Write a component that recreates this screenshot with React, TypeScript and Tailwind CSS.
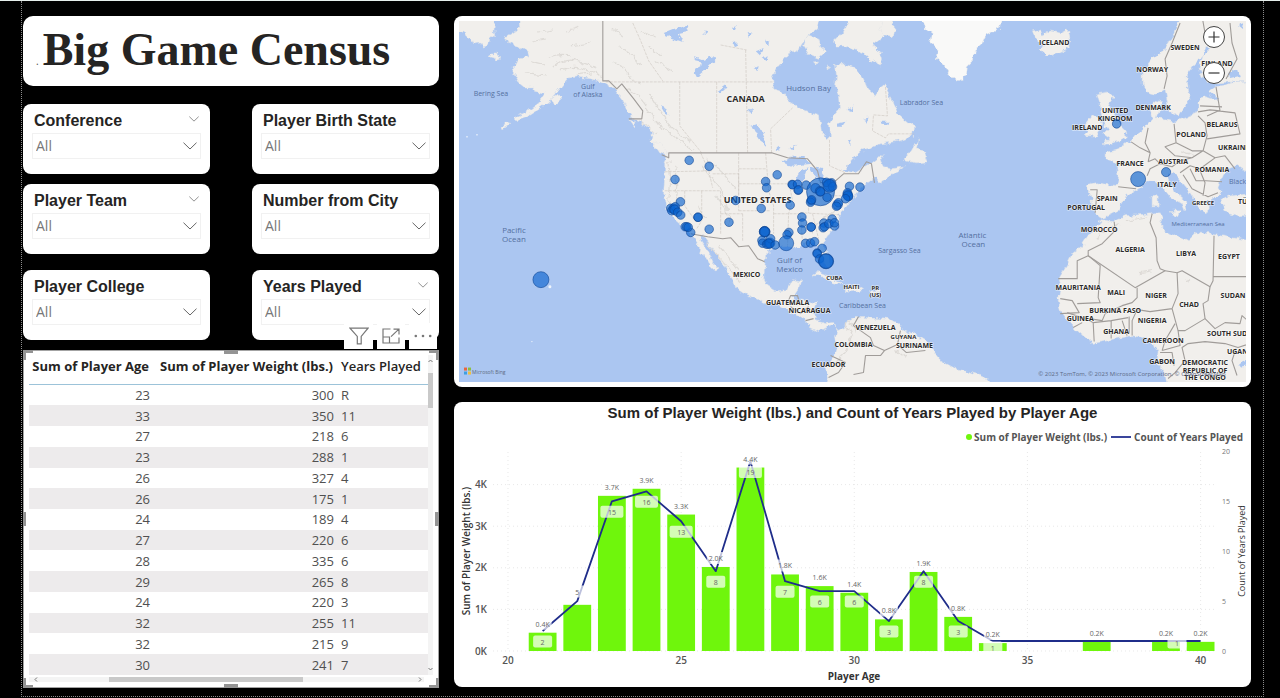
import React from "react";

const OCEAN = "#abc6f1";
const LAND = "#f1efec";
const UI_FONT = "font-['Open_Sans','Noto_Sans',sans-serif]";

/* ---------- Slicers ---------- */

type Slicer = { id: string; label: string; collapsible: boolean };

const SLICERS: Slicer[][] = [
  [
    { id: "conference", label: "Conference", collapsible: true },
    { id: "birth-state", label: "Player Birth State", collapsible: false },
  ],
  [
    { id: "team", label: "Player Team", collapsible: true },
    { id: "city", label: "Number from City", collapsible: false },
  ],
  [
    { id: "college", label: "Player College", collapsible: false },
    { id: "years", label: "Years Played", collapsible: true },
  ],
];

function Chevron({ className }: { className: string }) {
  return (
    <svg viewBox="0 0 14 8" className={className} fill="none" stroke="#666" strokeWidth="1" aria-hidden="true">
      <path d="M0.5 0.7 L7 7 L13.5 0.7" />
    </svg>
  );
}

function SlicerCard({ slicer }: { slicer: Slicer }) {
  return (
    <div className="h-[70px] w-[187px] rounded-lg bg-white px-[9px] pt-1">
      <div className="flex h-[25px] items-center justify-between pr-[2px] pl-[2px]">
        <label
          htmlFor={slicer.id}
          className="font-['Liberation_Sans',Arial,sans-serif] text-base leading-6 font-bold whitespace-nowrap text-[#252423]"
        >
          {slicer.label}
        </label>
        {slicer.collapsible && (
          <button type="button" aria-label={`${slicer.label} options`} className="pb-1">
            <Chevron className="h-[6px] w-[10px]" />
          </button>
        )}
      </div>
      <div className="relative">
        <select
          id={slicer.id}
          className={`${UI_FONT} h-[26px] w-full appearance-none border border-[#f1f1f1] bg-white pl-[3px] text-sm text-[#777]`}
        >
          <option>All</option>
        </select>
        <Chevron className="pointer-events-none absolute top-[9px] right-1 h-[8px] w-[14px]" />
      </div>
    </div>
  );
}

/* ---------- Table ---------- */

const ROWS: [number, number, string][] = [
  [23, 300, "R"],
  [33, 350, "11"],
  [27, 218, "6"],
  [23, 288, "1"],
  [26, 327, "4"],
  [26, 175, "1"],
  [24, 189, "4"],
  [27, 220, "6"],
  [28, 335, "6"],
  [29, 265, "8"],
  [24, 220, "3"],
  [32, 255, "11"],
  [32, 215, "9"],
  [30, 241, "7"],
];

const HANDLES = [
  "top-[-1px] left-[-1px] h-[10px] w-[10px] border-t-[3px] border-l-[3px]",
  "top-[-1px] right-[-1px] h-[10px] w-[10px] border-t-[3px] border-r-[3px]",
  "bottom-[-1px] left-[-1px] h-[10px] w-[10px] border-b-[3px] border-l-[3px]",
  "bottom-[-1px] right-[-1px] h-[10px] w-[10px] border-r-[3px] border-b-[3px]",
  "top-[-1px] left-1/2 h-[4px] w-[14px] -translate-x-1/2 border-t-[4px]",
  "bottom-[-1px] left-1/2 h-[4px] w-[14px] -translate-x-1/2 border-t-[4px]",
  "top-1/2 left-[-1px] h-[14px] w-[3px] -translate-y-1/2 border-l-[3px]",
  "top-1/2 right-[-1px] h-[14px] w-[4px] -translate-y-1/2 border-l-[4px]",
];

function VisualToolbar() {
  return (
    <div className="absolute right-[1px] bottom-full mb-[2px] flex gap-1">
      <button type="button" aria-label="Filters" className="flex h-[26px] w-[29px] items-center justify-center bg-white">
        <svg viewBox="0 0 20 18" className="h-[18px] w-[20px]" fill="none" stroke="#777" strokeWidth="1.2">
          <path d="M1 1.2 H19 L12.2 9.4 V16.8 H8.3 V9.4 Z" />
        </svg>
      </button>
      <button type="button" aria-label="Focus mode" className="flex h-[26px] w-[28px] items-center justify-center bg-white">
        <svg viewBox="0 0 18 16" className="h-[16px] w-[18px]" fill="none" stroke="#777" strokeWidth="1.2">
          <path d="M8.5 1 H1 V15 H17 V9.5 M1 9 H7.5 V15 M9 8.6 L16.6 1.4 M11.5 1.2 H17 V6.4" />
        </svg>
      </button>
      <button type="button" aria-label="More options" className="flex h-[26px] w-[28px] items-center justify-center bg-white">
        <svg viewBox="0 0 18 4" className="h-[4px] w-[18px]" fill="#777">
          <circle cx="1.8" cy="2" r="1.3" />
          <circle cx="9" cy="2" r="1.3" />
          <circle cx="16.2" cy="2" r="1.3" />
        </svg>
      </button>
    </div>
  );
}

function PlayerTable() {
  return (
    <section className="relative mt-[10px] h-[338px] border border-[#a3a3a3] bg-white pt-1 pl-[5px]">
      <VisualToolbar />
      {HANDLES.map((c) => (
        <span key={c} className={`absolute border-[#949494] ${c}`} />
      ))}
      <div className="flex">
        <table className={`${UI_FONT} h-[320px] flex-1 table-fixed border-collapse text-[13px] leading-[18px] text-[#505050]`}>
          <colgroup>
            <col className="w-[124px]" />
            <col className="w-[184px]" />
            <col />
          </colgroup>
          <thead>
            <tr className="h-[29px] border-b border-[#9cc3d9] align-top text-[13px] whitespace-nowrap text-[#252423]">
              <th className="p-0 pt-[2px] pr-1 text-right font-bold">Sum of Player Age</th>
              <th className="p-0 pt-[2px] pr-1 text-right font-bold">Sum of Player Weight (lbs.)</th>
              <th className="p-0 pt-[2px] pl-1 text-left font-semibold">Years Played</th>
            </tr>
          </thead>
          <tbody>
            {ROWS.map(([age, weight, years], i) => (
              <tr key={i} className="even:bg-[#edebec]">
                <td className="p-0 pr-[3px] text-right">{age}</td>
                <td className="p-0 pr-[3px] text-right">{weight}</td>
                <td className="p-0 pl-1">{years}</td>
              </tr>
            ))}
          </tbody>
        </table>
        <div className="mr-[5px] flex w-[5px] flex-col items-center bg-[#f4f4f4] pt-1 pb-1">
          <svg viewBox="0 0 5 4" className="h-1 w-[5px]" fill="none" stroke="#777"><path d="M0.5 3 L2.5 1 L4.5 3" /></svg>
          <div className="mt-[10px] h-[35px] w-full bg-[#c9c9c9]" />
          <svg viewBox="0 0 5 4" className="mt-auto h-1 w-[5px]" fill="none" stroke="#777"><path d="M0.5 1 L2.5 3 L4.5 1" /></svg>
        </div>
      </div>
      <div className="mt-[2px] mr-[14px] flex h-[5px] items-center bg-[#f4f4f4] pl-[5px]">
        <svg viewBox="0 0 4 5" className="h-[5px] w-1" fill="none" stroke="#777"><path d="M3 0.5 L1 2.5 L3 4.5" /></svg>
        <div className="ml-[71px] h-full w-[194px] bg-[#c9c9c9]" />
        <svg viewBox="0 0 4 5" className="mr-[2px] ml-auto h-[5px] w-1" fill="none" stroke="#777"><path d="M1 0.5 L3 2.5 L1 4.5" /></svg>
      </div>
    </section>
  );
}

/* ---------- Map ---------- */

const LAND_SHAPES = [
  // Siberia and the Bering islands
  "M450 10 L494 10 L493 30 L494 34 L489 38 L487 45 L482 46 L479 42 L473 43 L470 38 L466 36 L463 30 L450 31 Z",
  "M489 53 L494 53 L500 57 L497 58 L490 56 Z",
  // North and Central America
  "M517 10 L519 27 L512 31 L504 36 L507 42 L517 46 L527 50 L528 56 L518 58 L515 64 L511 68 L514 75 L518 82 L523 86 L531 86 L534 90 L541 92 L545 92 L538 102 L527 110 L514 117 L516 119 L527 115 L538 108 L547 102 L555 93 L563 83 L569 76 L575 75 L578 76 L590 78 L602 81 L610 86 L615 91 L622 100 L627 110 L632 117 L641 121 L645 127 L652 132 L650 140 L655 147 L663 153 L666 157 L664 162 L664 175 L663 192 L665 200 L666 208 L672 217 L679 223 L685 228 L689 233 L693 236 L700 248 L699 253 L707 258 L710 265 L717 271 L718 268 L712 262 L707 250 L700 240 L700 235 L705 238 L712 247 L722 262 L727 272 L733 280 L735 287 L742 292 L753 297 L765 302 L775 303 L785 308 L792 313 L803 318 L810 327 L818 331 L823 328 L833 325 L837 329 L835 337 L837 347 L835 353 L828 363 L825 368 L827 377 L823 392 L998 392 L983 375 L967 371 L955 368 L940 360 L933 350 L925 340 L917 335 L902 329 L897 323 L890 319 L877 318 L863 317 L855 317 L848 320 L845 326 L838 331 L832 322 L825 323 L818 321 L815 317 L813 310 L815 303 L805 300 L795 299 L792 297 L798 288 L800 280 L792 279 L787 289 L775 290 L767 285 L763 277 L764 267 L765 255 L770 249 L782 246 L790 246 L800 248 L803 243 L815 243 L818 249 L820 258 L825 265 L829 266 L830 260 L826 250 L823 241 L827 235 L835 228 L840 221 L838 214 L845 208 L850 201 L854 196 L860 188 L867 182 L875 177 L879 182 L889 176 L899 169 L904 166 L892 168 L884 167 L880 160 L884 153 L876 157 L866 165 L855 172 L842 170 L853 158 L863 149 L880 143 L900 140 L913 135 L914 127 L907 122 L897 113 L893 103 L890 93 L885 83 L878 88 L875 95 L867 88 L863 78 L855 67 L843 63 L835 64 L836 75 L835 85 L838 95 L839 108 L833 115 L829 122 L830 135 L826 139 L821 132 L819 115 L810 112 L798 107 L790 102 L783 92 L773 88 L772 77 L778 65 L788 52 L800 47 L807 35 L817 28 L822 10 Z",
  "M551 97 L556 94 L561 98 L558 101 L554 104 Z",
  "M500 126 L508 121 L507 124 L501 128 Z",
  "M652 141 L659 143 L667 150 L666 155 L659 152 Z",
  "M629 119 L635 121 L634 126 Z",
  // Arctic islands
  "M834 40 L842 32 L852 10 L895 10 L884 35 L873 43 L882 57 L880 64 L872 60 L863 52 L853 48 L843 45 L835 45 Z",
  "M883 10 L895 24 L893 36 L885 34 L878 28 Z",
  "M803 45 L807 35 L817 37 L820 46 L825 50 L817 57 L808 53 Z",
  "M813 61 L819 60 L816 64 Z",
  "M826 64 L829 66 L827 69 Z",
  // Newfoundland
  "M903 158 L911 149 L917 138 L915 148 L923 150 L927 161 L917 162 L904 160 Z",
  // Caribbean
  "M811 275 L818 271 L828 275 L838 281 L843 284 L833 282 L820 275 Z",
  "M845 285 L855 284 L862 289 L852 291 L845 290 Z",
  "M868 290 L879 290 L878 292 L869 292 Z",
  // Iceland
  "M1033 30 L1040 28 L1042 35 L1050 30 L1060 32 L1067 28 L1069 38 L1070 46 L1057 53 L1047 55 L1040 49 L1043 43 L1036 40 Z",
  // British Isles
  "M1097 93 L1108 91 L1113 97 L1108 105 L1114 110 L1118 122 L1126 130 L1127 137 L1120 140 L1108 143 L1102 145 L1110 138 L1103 133 L1108 128 L1103 121 L1101 111 L1100 103 Z",
  "M1085 124 L1092 115 L1100 118 L1101 128 L1097 135 L1085 135 L1089 128 Z",
  // Scandinavia
  "M1182 10 L1173 35 L1165 48 L1152 58 L1142 70 L1142 82 L1147 92 L1155 94 L1165 87 L1168 105 L1172 112 L1179 115 L1184 106 L1190 99 L1187 87 L1186 75 L1194 65 L1203 55 L1206 43 L1210 48 L1203 55 L1199 67 L1203 78 L1215 82 L1228 81 L1260 80 L1260 10 Z",
  // Continental Europe
  "M1260 80 L1233 82 L1215 86 L1210 90 L1213 98 L1203 95 L1198 102 L1198 111 L1188 115 L1173 121 L1165 119 L1156 118 L1158 110 L1162 102 L1153 100 L1151 108 L1153 118 L1145 127 L1137 132 L1130 140 L1123 146 L1118 149 L1105 152 L1105 157 L1117 162 L1119 175 L1117 185 L1095 182 L1087 184 L1089 193 L1092 200 L1092 210 L1100 218 L1108 215 L1118 210 L1122 202 L1125 197 L1133 191 L1140 187 L1148 180 L1156 181 L1163 187 L1170 196 L1180 202 L1183 210 L1188 203 L1178 194 L1170 183 L1167 175 L1173 172 L1180 179 L1190 191 L1195 199 L1199 209 L1206 213 L1210 205 L1206 200 L1216 196 L1221 192 L1219 186 L1222 175 L1226 169 L1236 165 L1248 172 L1260 172 Z",
  "M1221 198 L1232 195 L1260 192 L1260 213 L1240 215 L1225 211 Z",
  "M1152 195 L1157 194 L1157 206 L1152 206 Z",
  "M1170 211 L1180 210 L1178 215 Z",
  // Africa
  "M1101 219 L1113 221 L1125 215 L1152 213 L1159 211 L1162 217 L1160 225 L1167 232 L1182 237 L1187 240 L1195 232 L1208 233 L1232 237 L1260 241 L1260 392 L1168 392 L1165 373 L1157 363 L1158 350 L1155 343 L1145 338 L1132 335 L1122 337 L1107 340 L1093 343 L1080 333 L1068 320 L1060 310 L1058 300 L1060 288 L1058 278 L1067 263 L1072 253 L1082 245 L1087 237 L1095 227 Z",
];

const GREENLAND =
  "M918 10 L925 27 L932 33 L930 42 L937 48 L936 58 L943 64 L948 72 L957 80 L965 76 L966 66 L972 60 L974 50 L981 44 L985 35 L993 31 L1000 27 L1005 10 Z";

const LAKES = [
  "M782 162 L790 156 L803 156 L812 163 L802 164 L792 165 Z",
  "M798 171 L806 168 L802 180 L797 189 L795 180 Z",
  "M808 166 L820 168 L827 178 L818 180 L812 173 Z",
  "M694 56 L702 59 L712 55 L717 58 L708 66 L697 75 L694 69 L701 65 Z",
  "M662 32 L672 28 L685 24 L687 31 L678 33 L683 41 L672 37 L664 34 Z",
  "M751 126 L758 124 L764 137 L766 145 L760 141 L755 134 Z",
  "M716 90 L724 84 L727 87 L719 92 Z",
  "M835 123 L846 121 L843 125 L836 125 Z",
  "M863 118 L868 117 L866 123 Z",
  "M880 121 L889 121 L886 124 L881 123 Z",
  "M848 109 L853 103 L851 110 Z",
  "M848 141 L852 139 L850 143 Z",
  "M773 148 L777 144 L779 150 Z",
  "M788 148 L797 146 L790 150 Z",
  "M662 104 L668 114 L666 115 L661 106 Z",
  "M1210 90 L1219 97 L1213 98 Z",
  "M1228 72 L1238 68 L1240 75 L1230 77 Z",
  "M1238 24 L1244 22 L1243 28 Z",
  "M1237 363 L1247 359 L1247 366 L1240 367 Z",
  "M732 40 L736 42 L734 46 Z",
  "M756 50 L763 47 L760 54 Z",
  "M762 58 L767 54 L766 61 Z",
  "M753 68 L758 65 L757 70 Z",
  "M765 38 L770 41 L767 43 Z",
  "M745 31 L751 33 L747 36 Z",
  "M703 28 L707 32 L703 34 Z",
  "M730 27 L736 25 L734 30 Z",
  "M748 111 L752 107 L752 112 Z",
];

const BORDERS = [
  "M602 10 V80 L608 80 L616 88 L621 83 L633 98 L642 110 L641 118 L628 118",
  "M661 154 L668 157 V152 H771 L787 157 L807 158 L817 170 L820 182 L835 180 L843 173 L858 173 L866 161 L871 163 L874 182",
  "M690 233 L707 236 L722 238 L730 237 L738 246 L748 245 L757 258 L764 261",
  "M787 302 L790 295 H797 L799 303 M790 306 L800 313 L808 306 M805 320 L813 318",
  "M858 316 L853 325 L870 337 L873 345 L884 350 L880 355 L865 355 L863 372 L853 374 M830 355 L845 362 L838 372 L828 377 M884 350 L897 344 L900 330 M897 344 L906 352 L925 350",
  "M1180 22 L1172 42 L1165 58 L1167 75 L1164 88 M1202 15 L1206 38 M1230 22 L1232 42 L1237 58 L1226 78",
  "M1148 127 L1145 142 L1150 152 L1148 161 M1150 152 L1140 147 L1131 141 M1148 161 L1155 158 L1160 163 L1150 168 L1147 175 M1160 163 L1172 166 L1180 160 L1192 157 M1174 123 L1176 142 L1165 146 L1175 155 L1192 157 L1203 150 L1192 150 L1176 142 M1203 150 L1207 135 L1205 122 L1198 115 M1198 111 L1210 109 L1220 110 L1216 86 M1207 115 L1218 110 L1235 112 L1240 133 L1207 138 M1200 105 L1222 106 M1203 150 L1215 157 L1225 155 L1235 168 M1215 157 L1200 168 L1190 165 L1180 172 M1190 168 L1196 180 L1206 180 L1222 181 M1183 174 L1192 188 L1200 192 L1208 196 L1218 192 M1200 170 L1205 182 L1203 195",
  "M1118 186 L1136 188 M1090 189 L1097 189 L1095 212",
  "M1114 221 L1115 230 L1102 243 L1088 250 V255 L1077 260 V278 H1058 M1088 255 L1135 287 L1165 270 L1160 268 L1157 260 L1156 237 L1150 222 L1152 213",
  "M1165 270 L1177 272 L1182 270 L1210 286 L1213 280 L1214 235 M1213 276 H1250",
  "M1088 255 L1100 265 L1098 297 L1100 302 L1077 303 M1137 287 L1137 297 L1132 302 L1122 305 L1105 313 L1102 320 L1082 317 L1067 312",
  "M1137 309 L1150 311 L1172 308 L1178 293 L1177 272 M1137 309 L1132 320 V335 M1210 286 L1208 300 L1203 303 L1205 318 L1185 330 L1178 330 L1172 308",
  "M1175 323 L1165 340 L1162 350 M1178 330 L1180 345 L1162 350 M1205 318 L1215 328 L1225 322 L1240 323 L1242 315 L1250 322 M1188 343 L1205 341 L1225 343 L1238 347 L1250 343 M1188 343 L1182 347 L1185 360 L1175 372 L1168 378 M1160 352 H1172 L1174 365",
  "M1111 320 V338 M1122 320 L1127 335 M1129 316 V333 M1093 322 L1094 341 M1082 317 L1093 322 L1111 320 L1128 317 M1060 298 L1072 300 L1079 312 L1060 313 M1073 327 L1082 322 M1236 348 L1232 360 L1237 375",
];

const FAINT_LINES = [
  "M605 81 H772 M679 81 V125 L701 152 M716 81 V152 M745 49 L747 152 M720 44 L746 49 M771 152 L770 128 L792 107 M829 139 V165 L845 172",
  "M632 22 L640 40 L648 60 L662 80",
  "M885 86 L887 115 L873 114 L872 130 L885 137 L888 133 H914",
  "M664 171 L712 170 M700 152 L708 170 L712 187 M684 190 H720 M701 190 V220 L696 228 M664 190 H684 V205 L696 222 M712 173 H738 V195 M720 190 V233 M738 152 V210 M738 168 H765 M738 183 H768 M738 210 H770 M742 213 V240 M765 152 L768 190 L773 205 V233 M768 183 H790 M773 213 H800 M788 180 L792 200 L788 213 L787 245 M800 215 L802 243 M808 195 V212 M800 212 L838 214 M812 213 L818 238 M720 213 H742 M830 195 H850",
];

const RELIEF = [
  "M552 66 Q562 57 575 60 T596 68",
  "M560 70 Q570 64 584 68 T602 77",
  "M548 56 Q560 52 570 54 M530 40 L545 37 M538 32 L552 30 M565 30 L578 26 M570 45 L590 42 M575 74 L590 72",
  "M612 60 L624 68 L632 80 L640 84 M618 45 L632 55 L640 66 M625 88 L638 95 L650 112 L662 130 M648 92 L658 108 L672 128 L690 142 M660 125 L675 138 L694 150 M640 120 L655 133",
  "M668 160 L670 180 L668 200 L678 216 M674 165 L676 185 L674 205 M700 165 L712 178 L722 192 L728 210 M706 158 L722 172 L735 188 M716 196 L726 208 L730 225 M706 242 L722 260 L740 282 M718 245 L735 265 L748 280 M698 205 L704 218",
  "M845 322 L852 335 L845 350 L835 364 M848 320 L856 332 M810 232 L822 218 L838 206 M895 350 L905 358",
  "M1140 272 L1152 270 M1095 238 L1108 228 L1118 224 M1125 220 L1148 216 M1180 150 L1195 155 M1185 280 L1190 278",
  "M640 30 L655 36 M648 45 L660 55 M655 60 L672 70 M612 28 L622 36 M530 60 L545 64 M525 72 L545 74",
];

type Tone = "country" | "water";
type MapLabel = { t: string; x: number; y: number; s: number; tone: Tone; start?: boolean };

const c = (t: string, x: number, y: number, s: number, start = false): MapLabel => ({ t, x, y, s, tone: "country", start });
const w = (t: string, x: number, y: number, s: number, start = false): MapLabel => ({ t, x, y, s, tone: "water", start });

const LABELS: MapLabel[] = [
  w("Bering Sea", 490, 93, 7), w("Gulf", 587, 86, 7), w("of Alaska", 587, 94, 7),
  w("Hudson Bay", 808, 87, 8), w("Labrador Sea", 921, 102, 7), c("CANADA", 745, 98, 9),
  c("UNITED STATES", 757, 199, 9), w("Gulf of", 789, 259, 8), w("Mexico", 789, 268, 8),
  c("MEXICO", 746, 274, 7), c("CUBA", 834, 277, 6), c("HAITI", 851, 286, 6), c("PR", 875, 287, 6), c("(US)", 875, 294, 6),
  c("GUATEMALA", 787, 302, 7), c("NICARAGUA", 809, 310, 7), w("Caribbean Sea", 862, 305, 7),
  c("VENEZUELA", 875, 327, 7), c("GUYANA", 903, 336, 6), c("COLOMBIA", 853, 344, 7), c("SURINAME", 914, 345, 7), c("ECUADOR", 828, 364, 7),
  w("Atlantic", 972, 234, 8), w("Ocean", 973, 243, 8), w("Sargasso Sea", 899, 250, 7),
  w("Pacific", 513, 229, 8), w("Ocean", 513, 238, 8),
  c("ICELAND", 1054, 42, 7), c("SWEDEN", 1185, 47, 7), c("NORWAY", 1152, 69, 7), c("FINLAND", 1217, 63, 7),
  c("UNITED", 1115, 110, 7), c("KINGDOM", 1115, 118, 7), c("DENMARK", 1153, 107, 7), c("IRELAND", 1087, 127, 7),
  c("BELARUS", 1222, 124, 7), c("POLAND", 1191, 134, 7), c("UKRAINE", 1218, 147, 7, true), c("FRANCE", 1130, 163, 7),
  c("AUSTRIA", 1173, 161, 7), c("ROMANIA", 1212, 169, 7), c("ITALY", 1167, 184, 7), w("Black Sea", 1229, 181, 7, true),
  c("SPAIN", 1107, 198, 7), c("GREECE", 1203, 202, 6), c("TÜRKİYE", 1238, 201, 7, true), c("PORTUGAL", 1086, 207, 7),
  w("Mediterranean Sea", 1198, 223, 6), c("MOROCCO", 1099, 229, 7), c("ALGERIA", 1130, 249, 7), c("LIBYA", 1186, 253, 7),
  c("EGYPT", 1229, 256, 7), c("MAURITANIA", 1078, 287, 7), c("MALI", 1116, 292, 7), c("NIGER", 1156, 295, 7),
  c("CHAD", 1189, 304, 7), c("SUDAN", 1233, 295, 7), c("BURKINA FASO", 1115, 310, 7), c("GUINEA", 1080, 318, 7),
  c("NIGERIA", 1152, 320, 7), c("GHANA", 1116, 331, 7), c("CAMEROON", 1163, 340, 7), c("SOUTH SUDAN", 1207, 333, 7, true),
  c("UGANDA", 1227, 351, 7, true), c("GABON", 1162, 361, 7), c("DEMOCRATIC", 1205, 362, 7), c("REPUBLIC OF", 1205, 370, 7), c("THE CONGO", 1205, 377, 7),
];

const BUBBLES: [number, number, number][] = [
  [540, 279, 8], [688.5, 159.5, 4.3], [708.5, 165.5, 4.3], [674.3, 178.7, 4.3], [679.7, 201, 4.3],
  [776.6, 174, 4.3], [765, 180.7, 4.3], [766, 187, 4.3], [735, 199.7, 4.3], [760.6, 207.7, 4.3],
  [789.6, 204.3, 4.3], [728.3, 221.5, 4.3], [708.5, 228.5, 4.3], [697.3, 216.5, 4.3], [697.3, 216.5, 4.3],
  [690, 231.7, 4.3], [670, 207.5, 4.3], [671, 210, 4.3], [673, 208, 4.8], [674.5, 206, 4.3], [674, 209, 4.8], [677, 211.5, 4.3], [680, 214.3, 4.3],
  [684.5, 226, 4.3], [686, 226, 4.3], [687.5, 226.5, 4.3],
  [805.6, 184.3, 4.3], [791.5, 183.7, 4.3], [792, 184, 4.3], [797, 183.5, 4.3], [797.5, 189.5, 4.3], [798, 189, 4.3],
  [820, 191, 14], [815, 187.5, 4.8], [819.5, 190.5, 4.8], [820, 191, 4.3], [829, 184.5, 5.5], [831, 182, 4.3], [826, 181.5, 4.3], [832, 186, 4.3], [829, 185, 6.5], [826.5, 196.5, 4.3],
  [810.5, 200, 4.3], [810, 201.5, 4.3], [811, 199, 4.3],
  [849, 185.5, 4.3], [859.5, 186.3, 4.3], [847, 194, 4.8], [848, 196, 4.3], [847, 192, 4.3], [847.5, 195, 4.8], [845, 198, 4.3], [837, 204, 4.8], [838, 202, 4.3], [836, 205.5, 4.3],
  [801.3, 216.3, 4.3], [802, 222.3, 4.3], [801.3, 229.3, 4.3], [810.6, 226.3, 4.3], [810.6, 226.3, 4.3],
  [823.3, 222.3, 4.3], [822.6, 227, 4.3], [824, 226, 4.3], [831.6, 218.3, 4.3], [834, 225.3, 4.3], [828.3, 223, 4.3], [834, 222, 4.3],
  [764, 231, 5.3], [764, 231, 5.3], [764, 231, 4.8], [761.3, 239.7, 4.3], [762, 242.5, 4.3], [766, 243.5, 4.3], [769.3, 242.3, 5], [769, 243, 4.3], [770, 238, 4.3], [768, 243, 4.8], [774.6, 244.3, 4.3],
  [788.3, 231.7, 4.3], [786.5, 234, 4.3], [785.6, 242.5, 7.5],
  [805, 242.6, 4.3], [810, 242.3, 4.3], [814, 241, 4.3], [821.6, 247.6, 4.3], [816.6, 252.3, 4.3], [816.6, 253, 4.3], [819, 258.3, 4.3], [825.5, 260.5, 7.6], [825.5, 260.5, 7.2],
  [1116.5, 123, 4.3], [1138, 178.3, 7.5], [1166, 171.3, 4.6],
];

function WorldMap() {
  return (
    <svg viewBox="458 20 788 361" className="block h-auto w-full font-['Open_Sans','Noto_Sans',sans-serif]" role="img" aria-label="Players by birth city">
      <defs>
        <filter id="coast" x="-5%" y="-5%" width="110%" height="110%">
          <feTurbulence type="fractalNoise" baseFrequency="0.14" numOctaves="3" seed="8" result="n" />
          <feDisplacementMap in="SourceGraphic" in2="n" scale="7" xChannelSelector="R" yChannelSelector="G" />
        </filter>
      </defs>
      <rect x="450" y="12" width="804" height="376" fill={OCEAN} />
      <g filter="url(#coast)">
        <g fill={LAND} stroke="#e3e4e6" strokeWidth="0.5">
          {LAND_SHAPES.map((d) => <path key={d} d={d} />)}
          <path d={GREENLAND} fill="#f9f9f8" />
        </g>
        <g fill={OCEAN}>{LAKES.map((d) => <path key={d} d={d} />)}</g>
        <g fill="none" stroke="#dedbd7" strokeWidth="1.2">{RELIEF.map((d) => <path key={d} d={d} />)}</g>
      </g>
      <g fill="none" stroke="#cbc5be" strokeWidth="0.6" strokeDasharray="3 1">
        {FAINT_LINES.map((d) => <path key={d} d={d} />)}
      </g>
      <g fill="none" stroke="#a09c99" strokeWidth="1.1" strokeLinejoin="round">
        {BORDERS.map((d) => <path key={d} d={d} />)}
      </g>
      <g fill="#fff" fillOpacity="0.8">
        <circle cx="549" cy="286" r="1.5" />
        <circle cx="531" cy="341" r="0.7" />
        <circle cx="466" cy="136" r="0.8" />
        <circle cx="476" cy="134" r="0.8" />
      </g>
      {LABELS.map((l) => (
        <text
          key={`${l.t}-${l.x}-${l.y}`}
          x={l.x}
          y={l.y + l.s * 0.36}
          fontSize={l.s}
          textAnchor={l.start ? "start" : "middle"}
          fontWeight={l.tone === "country" ? 700 : 400}
          fill={l.tone === "country" ? "#2c2a2a" : "#54709f"}
          stroke={l.tone === "country" ? "#ffffff" : "none"}
          strokeOpacity="0.7"
          strokeWidth={l.tone === "country" ? 1.2 : 0}
          paintOrder="stroke"
        >
          {l.t}
        </text>
      ))}
      <g fill="#0a62ce" fillOpacity="0.64" stroke="#0b4190" strokeOpacity="0.7" strokeWidth="0.8">
        {BUBBLES.map(([x, y, r], i) => <circle key={i} cx={x} cy={y} r={r} />)}
      </g>
      <rect x="463" y="367" width="3" height="3" fill="#e8663d" />
      <rect x="467" y="367" width="3" height="3" fill="#8cbf3f" />
      <rect x="463" y="371" width="3" height="3" fill="#3f9fe0" />
      <rect x="467" y="371" width="3" height="3" fill="#f3bd3b" />
      <text x="471" y="373" fontSize="5" fill="#5d6a80">Microsoft Bing</text>
      <text x="1038" y="375" fontSize="6" fill="#5c6a86">© 2023 TomTom, © 2023 Microsoft Corporation, © OpenStreetMap</text>
    </svg>
  );
}

function ZoomButton({ label, d }: { label: string; d: string }) {
  return (
    <button type="button" aria-label={label} className="flex size-[22px] items-center justify-center rounded-full border border-[#444] bg-white">
      <svg viewBox="0 0 12 12" className="size-3" stroke="#333" strokeWidth="1.2" fill="none"><path d={d} /></svg>
    </button>
  );
}

/* ---------- Combo chart ---------- */

type Point = { age: number; weight: number; weightLabel?: string; count: number; countLabel?: string; dx?: number; dy?: number };

const POINTS: Point[] = [
  { age: 21, weight: 0.44, weightLabel: "0.4K", count: 2, countLabel: "2" },
  { age: 22, weight: 1.11, count: 5, countLabel: "5", dy: -20 },
  { age: 23, weight: 3.73, weightLabel: "3.7K", count: 15, countLabel: "15" },
  { age: 24, weight: 3.9, weightLabel: "3.9K", count: 16, countLabel: "16" },
  { age: 25, weight: 3.28, weightLabel: "3.3K", count: 13, countLabel: "13" },
  { age: 26, weight: 2.02, weightLabel: "2.0K", count: 8, countLabel: "8" },
  { age: 27, weight: 4.41, weightLabel: "4.4K", count: 19, countLabel: "19" },
  { age: 28, weight: 1.84, weightLabel: "1.8K", count: 7, countLabel: "7" },
  { age: 29, weight: 1.56, weightLabel: "1.6K", count: 6, countLabel: "6" },
  { age: 30, weight: 1.4, weightLabel: "1.4K", count: 6, countLabel: "6" },
  { age: 31, weight: 0.76, weightLabel: "0.8K", count: 3, countLabel: "3" },
  { age: 32, weight: 1.9, weightLabel: "1.9K", count: 8, countLabel: "8" },
  { age: 33, weight: 0.82, weightLabel: "0.8K", count: 3, countLabel: "3" },
  { age: 34, weight: 0.19, weightLabel: "0.2K", count: 1, countLabel: "1", dy: -4 },
  { age: 37, weight: 0.22, weightLabel: "0.2K", count: 1 },
  { age: 39, weight: 0.22, weightLabel: "0.2K", count: 1, countLabel: "1", dx: 11, dy: -9 },
  { age: 40, weight: 0.22, weightLabel: "0.2K", count: 1 },
];

const BASE = 651;
const px = (age: number) => 508 + (age - 20) * 34.63;
const pyWeight = (k: number) => BASE - k * 41.6;
const pyCount = (n: number) => BASE - n * 9.98;

function ComboChart() {
  const line = POINTS.map((p) => `${px(p.age)},${pyCount(p.count)}`).join(" ");
  return (
    <svg viewBox="454 446 797 241" className="block h-auto w-full font-['Open_Sans','Noto_Sans',sans-serif]" role="img" aria-label="Player weight and years played by player age">
      <g stroke="#dedede" strokeWidth="0.7" strokeDasharray="1 3">
        {[0, 1, 2, 3, 4].map((k) => <line key={k} x1="493" x2="1216" y1={pyWeight(k)} y2={pyWeight(k)} />)}
        {[20, 25, 30, 35, 40].map((a) => <line key={a} x1={px(a)} x2={px(a)} y1="452" y2={BASE} />)}
      </g>
      <g fill="#6ff60c">
        {POINTS.map((p) => (
          <rect key={p.age} x={px(p.age) - 13.9} y={pyWeight(p.weight)} width="27.8" height={BASE - pyWeight(p.weight)} />
        ))}
      </g>
      <polyline points={line} fill="none" stroke="#1f2d8a" strokeWidth="1.8" strokeLinejoin="round" />
      <g fontSize="8" fill="#666" textAnchor="middle">
        {POINTS.map((p) => {
          if (!p.weightLabel) return null;
          const y = Math.min(pyWeight(p.weight), pyCount(p.count) + 8) - 9;
          return (
            <g key={p.age}>
              <rect x={px(p.age) - 9} y={y - 6} width="18" height="12" rx="2" fill="#fff" fillOpacity="0.7" />
              <text x={px(p.age)} y={y + 3} fontSize="7">{p.weightLabel}</text>
            </g>
          );
        })}
        {POINTS.map((p) => {
          if (!p.countLabel) return null;
          const x = px(p.age) + (p.dx ?? 0);
          const y = pyCount(p.count) + 10.5 + (p.dy ?? 0);
          const half = p.countLabel.length > 1 ? 11.5 : 9.5;
          return (
            <g key={p.age}>
              <rect x={x - half} y={y - 6} width={half * 2} height="12" rx="2" fill="#fff" fillOpacity="0.7" />
              <text x={x} y={y + 3} fontSize="7">{p.countLabel}</text>
            </g>
          );
        })}
      </g>
      <g fontSize="10" fontWeight="600" fill="#555">
        {[0, 1, 2, 3, 4].map((k) => <text key={k} x="487" y={pyWeight(k) + 3.5} textAnchor="end">{k}K</text>)}
        {[20, 25, 30, 35, 40].map((a) => <text key={a} x={px(a)} y="664" textAnchor="middle">{a}</text>)}
      </g>
      <g fontSize="7" fill="#777">
        {[0, 5, 10, 15, 20].map((n) => <text key={n} x="1222" y={pyCount(n) + 3}>{n}</text>)}
      </g>
      <text x="854" y="680" textAnchor="middle" fontSize="10" fontWeight="700" fill="#333">Player Age</text>
      <text x="470" y="551" textAnchor="middle" fontSize="10" fontWeight="600" fill="#333" transform="rotate(-90 470 551)">Sum of Player Weight (lbs.)</text>
      <text x="1245" y="551" textAnchor="middle" fontSize="9" fill="#333" transform="rotate(-90 1245 551)">Count of Years Played</text>
    </svg>
  );
}

/* ---------- Page ---------- */

export default function App() {
  return (
    <div className="min-h-screen border-t border-[#e6efec] bg-black">
      <main className="mr-4 ml-[21px] grid grid-cols-[416px_minmax(0,1fr)] items-start gap-[15px] border-x border-b border-dotted border-[#8a8a8a] pt-[15px] pr-3 pb-2 pl-px">
        <div>
          <header className="flex h-[70px] items-center rounded-[10px] bg-white pl-[13px]">
            <span className="mt-5 text-[10px] leading-none text-[#555]">.</span>
            <h1 className="pb-[2px] pl-1 font-['Liberation_Serif','Times_New_Roman',serif] text-[46px] leading-none font-bold whitespace-nowrap text-[#252423]">
              Big Game Census
            </h1>
          </header>
          <div className="mt-[18px] flex justify-between">
            {SLICERS[0].map((s) => <SlicerCard key={s.id} slicer={s} />)}
          </div>
          <div className="mt-[10px] flex justify-between">
            {SLICERS[1].map((s) => <SlicerCard key={s.id} slicer={s} />)}
          </div>
          <div className="mt-4 flex justify-between">
            {SLICERS[2].map((s) => <SlicerCard key={s.id} slicer={s} />)}
          </div>
          <PlayerTable />
        </div>

        <div className="flex flex-col gap-[15px]">
          <section className="relative rounded-lg bg-white p-[5px]">
            <WorldMap />
            <div className="absolute top-[10px] right-[26px] flex flex-col gap-[14px]">
              <ZoomButton label="Zoom in" d="M6 0.5 V11.5 M0.5 6 H11.5" />
              <ZoomButton label="Zoom out" d="M0.5 6 H11.5" />
            </div>
          </section>
          <section className="rounded-lg bg-white">
            <h2 className="pt-[2px] text-center font-['Liberation_Sans',Arial,sans-serif] text-[15px] leading-[18px] font-bold text-[#252423]">
              Sum of Player Weight (lbs.) and Count of Years Played by Player Age
            </h2>
            <div className={`${UI_FONT} flex h-6 items-end justify-end gap-1 pr-2 text-[10px] leading-[18px] font-bold text-[#555]`}>
              <span className="flex items-center gap-[2px]">
                <i className="size-[6px] rounded-full bg-[#6ff60c]" />
                Sum of Player Weight (lbs.)
              </span>
              <span className="flex items-center gap-[3px]">
                <i className="h-[2px] w-5 bg-[#3a459c]" />
                Count of Years Played
              </span>
            </div>
            <ComboChart />
          </section>
        </div>
      </main>
    </div>
  );
}
